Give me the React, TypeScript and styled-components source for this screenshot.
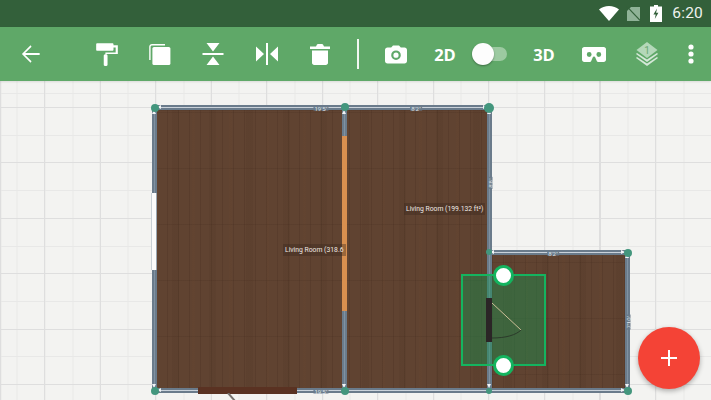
import React from "react";
import styled, { createGlobalStyle } from "styled-components";

const Global = createGlobalStyle`
  html, body { margin: 0; padding: 0; width: 711px; height: 400px; overflow: hidden; background: #f3f3f1; font-family: Roboto, "Liberation Sans", sans-serif; }
`;

const Screen = styled.div`
  width: 711px; height: 400px; display: flex; flex-direction: column; overflow: hidden;
`;

const StatusBar = styled.div`
  height: 27px; flex: none; background: #33603a; display: flex; align-items: center; justify-content: flex-end;
  padding-right: 8px; color: #eef3ee;
`;
const StatusIcon = styled.svg<{ $mr: number }>`
  display: block; margin-right: ${p => p.$mr}px; fill: #fff;
`;
const Clock = styled.span`
  font-size: 15.5px; letter-spacing: 0.2px; line-height: 27px; margin-left: 3px;
`;

const Toolbar = styled.div`
  height: 54px; flex: none; background: #5fa868; display: flex; align-items: center; color: #fff; position: relative; z-index: 2;
  box-shadow: 0 1px 2px rgba(0,0,0,.1);
`;
const Slot = styled.div<{ $w: number; $pr?: number }>`
  width: ${p => p.$w}px; padding-right: ${p => p.$pr ?? 0}px; box-sizing: border-box; flex: none; height: 100%;
  display: flex; align-items: center; justify-content: center;
`;
const Icon = styled.svg`
  display: block; fill: #fff;
`;
const Divider = styled.div`
  width: 2px; height: 30px; background: #f2f7f2;
`;
const ModeLabel = styled.span`
  font-size: 16.5px; font-weight: 700; font-family: "Open Sans", Roboto, sans-serif; color: #fff;
`;
const SwitchTrack = styled.div`
  width: 34px; height: 14px; border-radius: 7px; background: #9ccaa1; position: relative;
`;
const SwitchKnob = styled.div`
  position: absolute; left: -1px; top: -4px; width: 22px; height: 22px; border-radius: 50%; background: #fdfdfd;
  box-shadow: 0 1px 2px rgba(0,0,0,.35);
`;

const Canvas = styled.div`
  flex: 1; position: relative; overflow: hidden; background-color: #f3f3f1;
  background-image:
    repeating-linear-gradient(to right, #dedede 0 1px, transparent 1px 55.55px),
    repeating-linear-gradient(to bottom, #dedede 0 1px, transparent 1px 55.4px),
    repeating-linear-gradient(to right, #e8e8e7 0 1px, transparent 1px 27.78px),
    repeating-linear-gradient(to bottom, #e8e8e7 0 1px, transparent 1px 27.7px);
  background-position: 44px 0, 0 26px, 16.5px 0, 0 26px;
`;

const Room = styled.div<{ $x: number; $y: number; $w: number; $h: number }>`
  position: absolute; left: ${p => p.$x}px; top: ${p => p.$y}px; width: ${p => p.$w}px; height: ${p => p.$h}px;
  background-color: #604331;
  background-image:
    repeating-linear-gradient(to bottom, rgba(45,25,12,.1) 0 1px, transparent 1px 56px),
    repeating-linear-gradient(to right, rgba(40,22,10,.13) 0 1px, transparent 1px 11px),
    repeating-linear-gradient(to right, rgba(110,72,46,.12) 0 3px, transparent 3px 17px, rgba(50,30,18,.07) 17px 24px, transparent 24px 37px);
  background-position: 0 ${p => p.$y % 23}px, ${p => p.$x % 11}px 0, 0 0;
  filter: blur(0.4px);
`;

const Wall = styled.div<{ $x: number; $y: number; $len: number; $v?: boolean }>`
  position: absolute; left: ${p => p.$x}px; top: ${p => p.$y}px;
  width: ${p => (p.$v ? "5px" : `${p.$len}px`)}; height: ${p => (p.$v ? `${p.$len}px` : "5px")};
  background: #6a7b8b ${p => (p.$v
    ? "linear-gradient(to right, transparent 2px, rgba(150,168,184,.5) 2px 3px, transparent 3px)"
    : "linear-gradient(to bottom, transparent 2px, rgba(226,232,238,.8) 2px 3px, transparent 3px)")};
  &::before, &::after {
    content: ""; position: absolute; width: 0; height: 0; border: 2.5px solid transparent;
  }
  &::before {
    ${p => (p.$v ? "left: 0; top: 2px; border-bottom: 4px solid #f2f4f6; border-top: 0;" : "top: 0; left: 2px; border-right: 4px solid #f2f4f6; border-left: 0;")}
  }
  &::after {
    ${p => (p.$v ? "left: 0; bottom: 2px; border-top: 4px solid #f2f4f6; border-bottom: 0;" : "top: 0; right: 2px; border-left: 4px solid #f2f4f6; border-right: 0;")}
  }
`;
const OrangeWall = styled.div`
  position: absolute; left: 342px; top: 55px; width: 5px; height: 175px; background: #d88f4f;
`;
const WindowPane = styled.div`
  position: absolute; left: 151px; top: 112px; width: 6px; height: 77px; background: #fbfbfb;
  border-left: 1px solid #c9d0d6; border-right: 1px solid #9aa6b1; box-sizing: border-box;
`;
const BottomDoor = styled.div`
  position: absolute; left: 198px; top: 306px; width: 99px; height: 7px; background: #5a3222;
`;
const DoorSwing = styled.svg`
  position: absolute; left: 226px; top: 312px;
`;
const Joint = styled.div<{ $x: number; $y: number; $r?: number }>`
  position: absolute; left: ${p => p.$x - (p.$r ?? 4)}px; top: ${p => p.$y - (p.$r ?? 4)}px;
  width: ${p => (p.$r ?? 4) * 2}px; height: ${p => (p.$r ?? 4) * 2}px; border-radius: 50%; background: #43967d;
`;
const Dim = styled.span<{ $x: number; $y: number; $rot?: boolean }>`
  position: absolute; left: ${p => p.$x}px; top: ${p => p.$y}px; transform: translate(-50%, -50%) ${p => (p.$rot ? "rotate(-90deg)" : "")};
  font-size: 6px; line-height: 5px; color: #dfe4e9; background: #6a7b8b; padding: 0 1px; white-space: nowrap;
`;
const RoomLabel = styled.span<{ $x: number; $y: number }>`
  position: absolute; left: ${p => p.$x}px; top: ${p => p.$y}px;
  font-size: 6.8px; line-height: 12px; padding: 0 2px; color: #efe9e4; background: rgba(60,40,30,.4); white-space: nowrap;
`;

const Selection = styled.div`
  position: absolute; left: 461px; top: 193px; width: 85px; height: 92px; box-sizing: border-box;
  background: rgba(20,150,80,.42); border: 2px solid #14b45f;
`;
const DoorLeaf = styled.div`
  position: absolute; left: 486px; top: 217px; width: 6px; height: 44px; background: #2b2526;
`;
const DoorArc = styled.svg`
  position: absolute; left: 490px; top: 220px;
`;
const Handle = styled.div<{ $y: number }>`
  position: absolute; left: 493px; top: ${p => p.$y - 10}px; width: 21px; height: 21px; box-sizing: border-box;
  border-radius: 50%; background: #fff; border: 3px solid #14b45f;
`;
const Fab = styled.button`
  position: absolute; left: 638px; top: 246px; width: 62px; height: 62px; border: 0; padding: 0; border-radius: 50%;
  background: #f44336; box-shadow: 0 2px 5px rgba(0,0,0,.3); display: flex; align-items: center; justify-content: center;
`;

export default function App() {
  return (
    <Screen>
      <Global />
      <StatusBar>
        <StatusIcon $mr={7} width="20" height="16" viewBox="0 0 20 16">
          <path d="M10 15 0 3.6C2.6 1.4 6.1 0 10 0s7.4 1.4 10 3.6z" />
        </StatusIcon>
        <StatusIcon $mr={9} width="15" height="16" viewBox="0 0 15 16">
          <path d="M5 1h9v14H1V5z" fill="#8fb297" />
          <path d="M1 .6 15 15.4" stroke="#33603a" strokeWidth="1.2" />
        </StatusIcon>
        <StatusIcon $mr={7} width="12" height="17" viewBox="0 0 12 17">
          <path d="M4 0h4v1.5h4V17H0V1.5h4z" />
          <path d="M7 3.5 3.4 9.6h2.3L4.8 14l3.6-6.2H6.1z" fill="#33603a" />
        </StatusIcon>
        <Clock>6:20</Clock>
      </StatusBar>
      <Toolbar>
        <Slot $w={80} $pr={18}>
          <Icon width="26" height="26" viewBox="0 0 24 24">
            <path d="M20 11.1H6.6l5.9-5.9L11.6 4l-8 8 8 8 .9-1.2-5.9-5.9H20z" />
          </Icon>
        </Slot>
        <Slot $w={53.4}>
          <Icon width="26" height="26" viewBox="0 0 24 24">
            <path d="M18 4V3c0-.55-.45-1-1-1H3c-.55 0-1 .45-1 1v5c0 .55.45 1 1 1h14c.55 0 1-.45 1-1V6h2v4.5H10.5v2H10c-.55 0-1 .45-1 1V22c0 .55.45 1 1 1h1.5c.55 0 1-.45 1-1v-8.5c0-.55-.45-1-1-1V12H22V4z" />
          </Icon>
        </Slot>
        <Slot $w={53.4}>
          <Icon width="22" height="22" viewBox="0 0 22 22">
            <path d="M3 1h13v1.4H3c-.8 0-1.4.6-1.4 1.4V17H.2V3.8C.2 2.2 1.5 1 3 1z" />
            <rect x="3.4" y="4" width="18" height="18" rx="1.6" />
          </Icon>
        </Slot>
        <Slot $w={53.4}>
          <Icon width="22" height="24" viewBox="0 0 22 24">
            <path d="M4.5 1h13L11 9.5zM.5 11h21v2H.5zM11 14.5 17.5 23h-13z" />
          </Icon>
        </Slot>
        <Slot $w={53.4}>
          <Icon width="24" height="22" viewBox="0 0 24 22">
            <path d="M1 3.5 9 11l-8 7.5zM11 0h2v22h-2zM23 3.5V18.5L15 11z" />
          </Icon>
        </Slot>
        <Slot $w={53.4}>
          <Icon width="22" height="24" viewBox="0 0 22 24">
            <path d="M3 8.5h16v12.3c0 1.3-1 2.2-2.2 2.2H5.2C4 23 3 22.1 3 20.8zM1 4.5h6L8 2.6c.2-.4.5-.6 1-.6h4c.5 0 .8.2 1 .6l1 1.9h6v2.5H1z" />
          </Icon>
        </Slot>
        <Slot $w={22}><Divider /></Slot>
        <Slot $w={54}>
          <Icon width="24" height="24" viewBox="0 0 24 24">
            <path fillRule="evenodd" d="M9 3.5 7.2 5.5H3.5C2.1 5.5 1 6.6 1 8v11c0 1.4 1.1 2.5 2.5 2.5h17c1.4 0 2.5-1.1 2.5-2.5V8c0-1.4-1.1-2.5-2.5-2.5h-3.7L15 3.5zm3 14.5a4.8 4.8 0 1 1 0-9.6 4.8 4.8 0 0 1 0 9.6zm0-2.2a2.6 2.6 0 1 0 0-5.2 2.6 2.6 0 0 0 0 5.2z" />
          </Icon>
        </Slot>
        <Slot $w={44}><ModeLabel>2D</ModeLabel></Slot>
        <Slot $w={46}>
          <SwitchTrack><SwitchKnob /></SwitchTrack>
        </Slot>
        <Slot $w={62}><ModeLabel>3D</ModeLabel></Slot>
        <Slot $w={38}>
          <Icon width="24" height="24" viewBox="0 0 24 24">
            <path d="M21.7 5H2.3C1 5 0 6 0 7.2v10.6C0 19 1 20 2.3 20h5.6c.5 0 1-.3 1.2-.8l1.6-3.6c.2-.6.7-1 1.3-1s1.1.4 1.3 1l1.6 3.6c.2.5.7.8 1.2.8h5.6c1.3 0 2.3-1 2.3-2.2V7.2C24 6 23 5 21.7 5zM7.2 14.9a2.4 2.4 0 1 1 0-4.8 2.4 2.4 0 0 1 0 4.8zm9.6 0a2.4 2.4 0 1 1 0-4.8 2.4 2.4 0 0 1 0 4.8z" fillRule="evenodd" />
          </Icon>
        </Slot>
        <Slot $w={68}>
          <Icon width="22" height="24" viewBox="0 0 22 24">
            <path d="M1 15 11 21.5 21 15l1 1-11 8L0 16z" fill="#d5e8d8" />
            <path d="M1 11 11 17.5 21 11l1 1-11 8L0 12z" fill="#d5e8d8" />
            <path d="M11 0 21.5 8 11 16 .5 8z" fill="#b4d8b9" />
            <text x="11" y="11.5" fontSize="10" fontFamily="Roboto, sans-serif" textAnchor="middle" fill="#6aa873">1</text>
          </Icon>
        </Slot>
        <Slot $w={20}>
          <Icon width="6" height="20" viewBox="0 0 6 20">
            <circle cx="3" cy="3" r="2.6" /><circle cx="3" cy="10" r="2.6" /><circle cx="3" cy="17" r="2.6" />
          </Icon>
        </Slot>
      </Toolbar>
      <Canvas>
        <Room $x={155} $y={27} $w={190} $h={282} />
        <Room $x={345} $y={27} $w={143} $h={282} />
        <Room $x={488} $y={171} $w={139} $h={138} />

        <Wall $x={155} $y={24} $len={334} />
        <Wall $x={488} $y={169} $len={139} />
        <Wall $x={155} $y={307} $len={472} />
        <Wall $v $x={152} $y={27} $len={282} />
        <Wall $v $x={342} $y={27} $len={282} />
        <Wall $v $x={487} $y={27} $len={282} />
        <Wall $v $x={625} $y={171} $len={138} />
        <OrangeWall />
        <WindowPane />
        <BottomDoor />
        <DoorSwing width="12" height="8" viewBox="0 0 12 8">
          <path d="M2 0 9 8" stroke="#77736f" strokeWidth="2" fill="none" />
        </DoorSwing>

        <Joint $x={155} $y={27} /><Joint $x={344.5} $y={26} /><Joint $x={489} $y={27} $r={5} />
        <Joint $x={489} $y={171} $r={3} /><Joint $x={627.5} $y={172} />
        <Joint $x={155} $y={310} /><Joint $x={344.5} $y={310} /><Joint $x={489} $y={310} $r={3} /><Joint $x={627.5} $y={310} />

        <Dim $x={321} $y={26.5}>19'5"</Dim>
        <Dim $x={416} $y={26.5}>8'2"</Dim>
        <Dim $x={553} $y={171.5}>8'2"</Dim>
        <Dim $x={321} $y={309.5}>19'5"</Dim>
        <Dim $rot $x={489.5} $y={102}>8'8"</Dim>
        <Dim $rot $x={627.5} $y={241}>7'10"</Dim>

        <RoomLabel $x={283} $y={163}>Living Room (318.6</RoomLabel>
        <RoomLabel $x={404} $y={122}>Living Room (199.132 ft²)</RoomLabel>

        <Selection />
        <DoorLeaf />
        <DoorArc width="34" height="40" viewBox="0 0 34 40">
          <path d="M2 2 31 29" stroke="#cdbf98" strokeWidth="1" fill="none" />
          <path d="M31 29C26 34 16 37 2 37" stroke="#2b3a2a" strokeWidth="1" fill="none" />
        </DoorArc>
        <Handle $y={194} />
        <Handle $y={284} />
        <Fab aria-label="Add">
          <Icon width="18" height="18" viewBox="0 0 18 18">
            <path d="M8 1h2v7h7v2h-7v7H8v-7H1V8h7z" />
          </Icon>
        </Fab>
      </Canvas>
    </Screen>
  );
}
